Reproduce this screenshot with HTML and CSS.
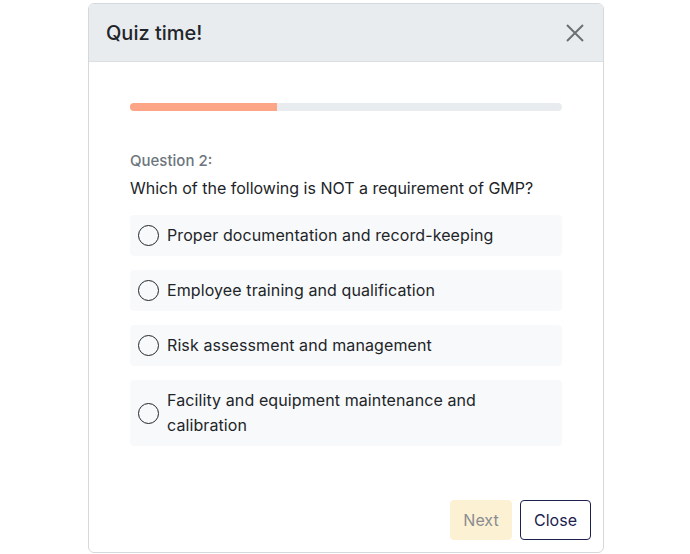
FILE: index.html
```html
<!DOCTYPE html>
<html lang="en">
<head>
    <meta charset="utf-8">
    <title>Quiz time!</title>
    <link rel="stylesheet" href="styles.css">
</head>
<body>
    <div class="modal">
        <div class="modal-header">
            <h2 class="modal-title">Quiz time!</h2>
            <button class="btn-close" aria-label="Close">
                <svg width="18" height="18" viewBox="0 0 18 18"><path d="M1 1L17 17M17 1L1 17" stroke="#6c6f73" stroke-width="2" fill="none"/></svg>
            </button>
        </div>
        <div class="modal-body">
            <div class="progress"><div class="progress-bar" style="width: 34%"></div></div>
            <p class="q-label">Question 2:</p>
            <p class="q-text">Which of the following is NOT a requirement of GMP?</p>
            <ul class="options">
                <li class="option"><span class="radio"></span><span>Proper documentation and record-keeping</span></li>
                <li class="option"><span class="radio"></span><span>Employee training and qualification</span></li>
                <li class="option"><span class="radio"></span><span>Risk assessment and management</span></li>
                <li class="option"><span class="radio"></span><span>Facility and equipment maintenance and calibration</span></li>
            </ul>
        </div>
        <div class="modal-footer">
            <button class="btn btn-next" disabled>Next</button>
            <button class="btn btn-close-outline">Close</button>
        </div>
    </div>
</body>
</html>
```
FILE: styles.css
```css
* {
    margin: 0;
    padding: 0;
    box-sizing: border-box;
    list-style: none;
}

body {
    background: #fff;
    font-family: "Inter", "Noto Sans", sans-serif;
    color: #212529;
}

.modal {
    width: 516px;
    height: 550px;
    margin: 3px 0 0 88px;
    border: 1px solid #d6d9dc;
    border-radius: 6px;
    display: flex;
    flex-direction: column;
    overflow: hidden;
}

.modal-header {
    height: 58px;
    background: #e9ecef;
    border-bottom: 1px solid #dde0e3;
    display: flex;
    align-items: center;
    justify-content: space-between;
    padding: 0 16px 0 17px;
}

.modal-title {
    font-size: 20px;
    font-weight: 500;
    color: #212529;
}

.btn-close {
    border: 0;
    background: none;
    width: 24px;
    height: 24px;
    display: flex;
    align-items: center;
    justify-content: center;
}

.modal-body {
    flex: 1;
    padding: 41px 41px 0;
}

.progress {
    height: 8px;
    background: #e9ecef;
    border-radius: 4px;
    overflow: hidden;
}

.progress-bar {
    height: 100%;
    background: #fda587;
}

.q-label {
    margin-top: 40px;
    font-size: 15px;
    font-weight: 500;
    color: #6c757d;
}

.q-text {
    margin-top: 6px;
    font-size: 16px;
    line-height: 24px;
}

.options {
    margin-top: 15px;
    display: flex;
    flex-direction: column;
    gap: 14px;
}

.option {
    background: #f8f9fa;
    border-radius: 4px;
    min-height: 41px;
    padding: 8px;
    display: flex;
    align-items: center;
    gap: 8px;
    font-size: 16px;
    line-height: 25px;
    letter-spacing: 0.1px;
}

.radio {
    flex: none;
    width: 21px;
    height: 21px;
    border: 1.5px solid #212529;
    border-radius: 50%;
}

.modal-footer {
    display: flex;
    justify-content: flex-end;
    gap: 8px;
    padding: 0 12px 12px;
}

.btn {
    height: 40px;
    padding: 0 12px;
    font-family: inherit;
    font-size: 16px;
    border-radius: 4px;
    background: #fff;
}

.btn-next {
    background: #fdf1d3;
    border: 1px solid #fdf1d3;
    color: #8a8c92;
    width: 62px;
}

.btn-close-outline {
    border: 1.5px solid #1c2150;
    color: #1c2150;
    width: 71px;
}
```
